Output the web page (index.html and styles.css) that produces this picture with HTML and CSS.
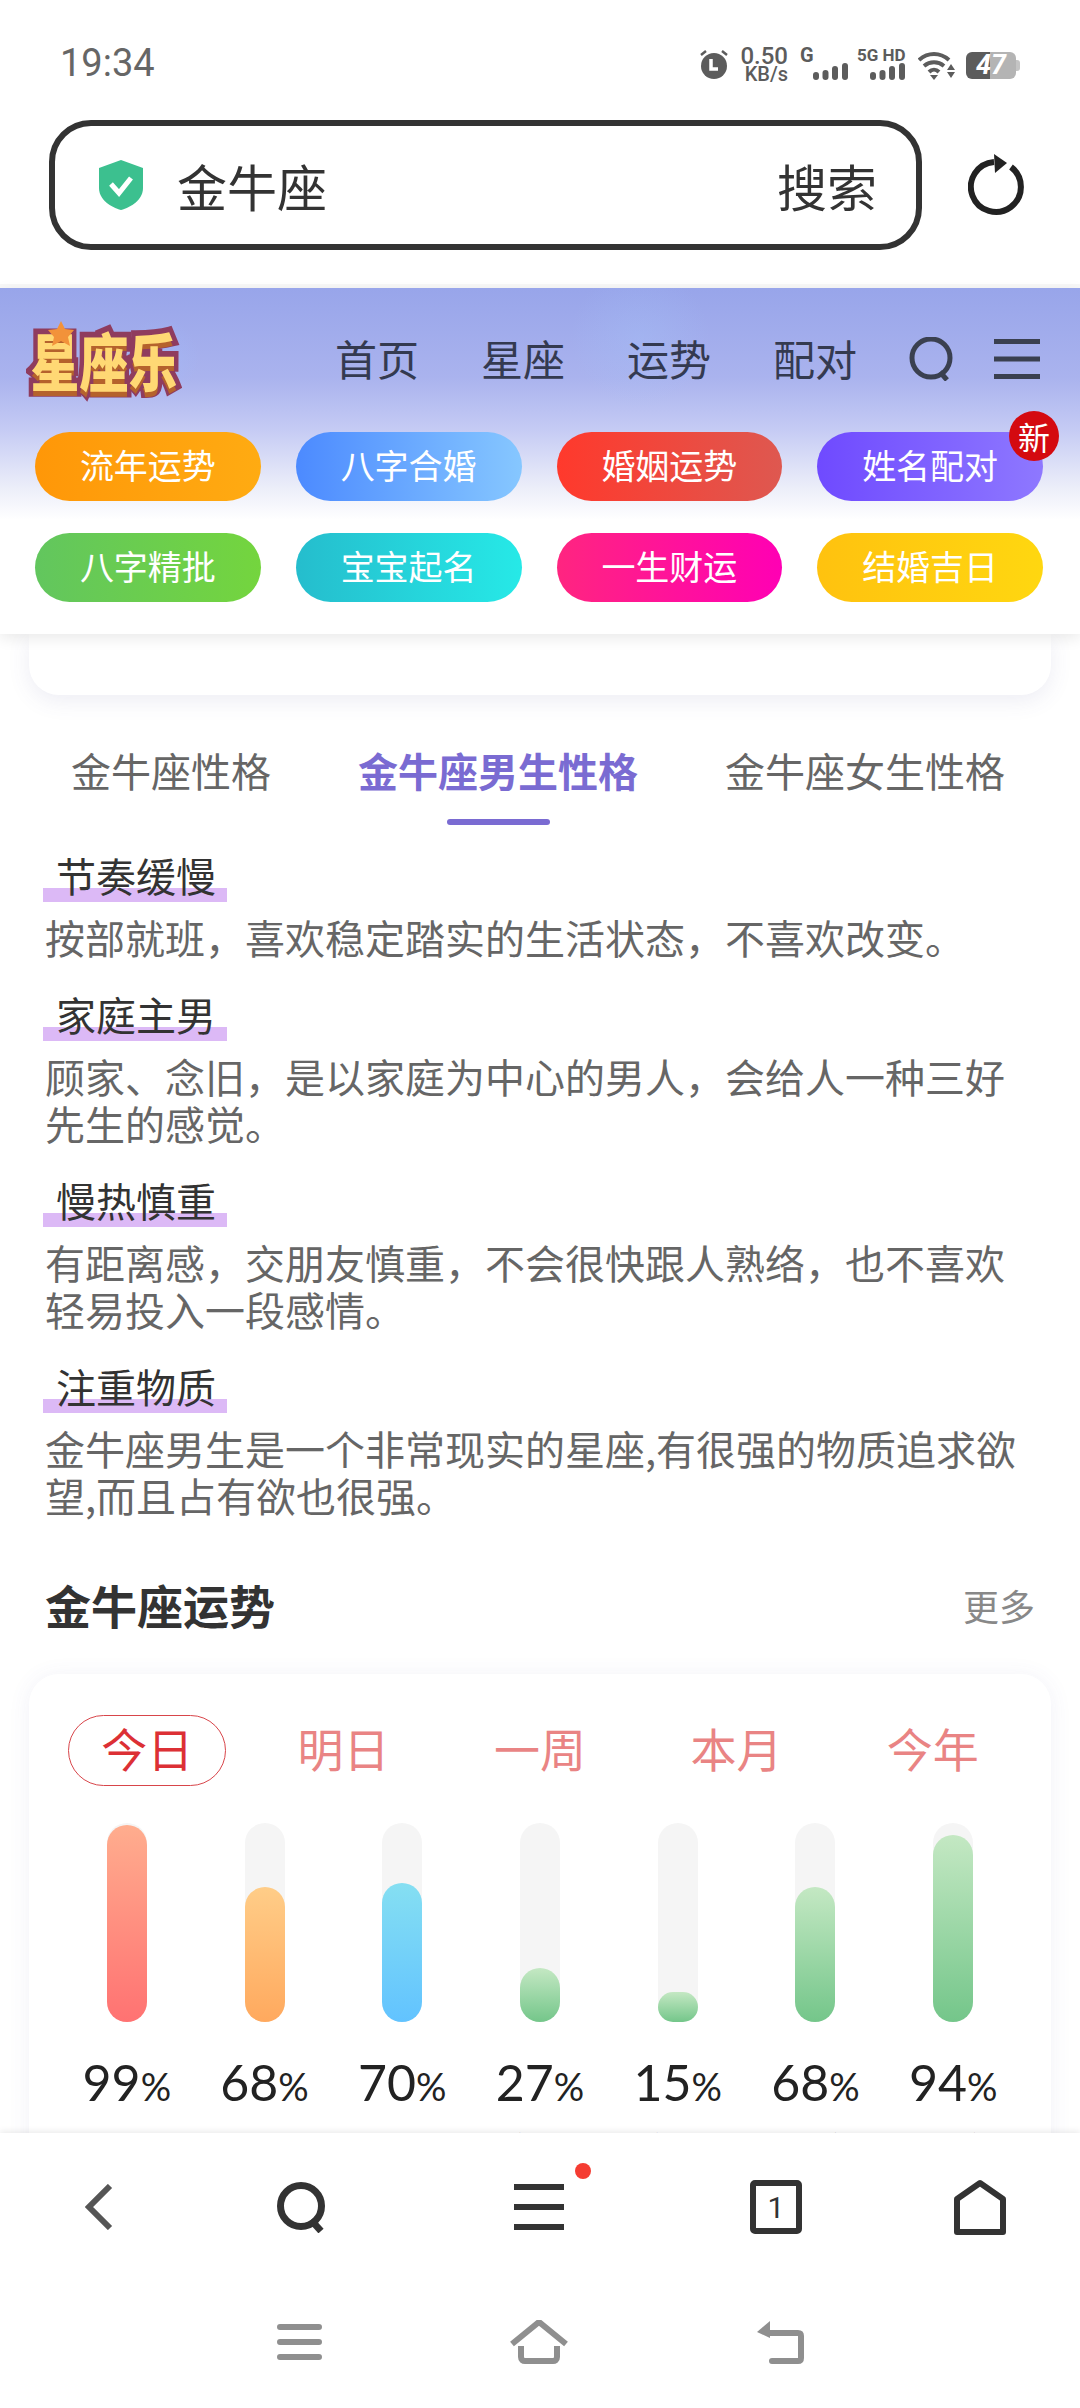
FILE: index.html
```html
<!DOCTYPE html>
<html lang="zh-CN">
<head>
    <meta charset="UTF-8">
    <meta name="viewport" content="width=device-width, initial-scale=1.0">
    <title>金牛座</title>
    <link rel="stylesheet" href="styles.css">
</head>
<body>

<!-- 浏览器顶部 -->
<div class="browser-top">
    <div class="status-bar">
        <span class="status-time">19:34</span>
        <div class="status-icons">
            <svg class="icon-alarm" width="28" height="29" viewBox="0 0 28 29">
                <circle cx="14" cy="16" r="13" fill="#5c5c5c"/>
                <path d="M11 9v10h7" fill="none" stroke="#fff" stroke-width="3.5"/>
                <path d="M1 5l5-4M27 5l-5-4" stroke="#5c5c5c" stroke-width="2.5"/>
            </svg>
            <div class="net-speed">
                <span class="net-num">0.50</span>
                <span class="net-unit">KB/s</span>
            </div>
            <div class="signal">
                <span class="signal-label signal-g">G</span>
                <svg class="signal-bars" width="35" height="17" viewBox="0 0 35 17">
                    <rect x="0" y="9" width="6" height="8" rx="3" fill="#5c5c5c"/>
                    <rect x="9.5" y="7" width="6" height="10" rx="3" fill="#5c5c5c"/>
                    <rect x="19" y="3" width="6" height="14" rx="3" fill="#5c5c5c"/>
                    <rect x="29" y="0" width="6" height="17" rx="3" fill="#5c5c5c"/>
                </svg>
            </div>
            <div class="signal">
                <span class="signal-label">5G HD</span>
                <svg class="signal-bars" width="35" height="17" viewBox="0 0 35 17">
                    <rect x="0" y="9" width="6" height="8" rx="3" fill="#5c5c5c"/>
                    <rect x="9.5" y="7" width="6" height="10" rx="3" fill="#5c5c5c"/>
                    <rect x="19" y="3" width="6" height="14" rx="3" fill="#5c5c5c"/>
                    <rect x="29" y="0" width="6" height="17" rx="3" fill="#5c5c5c"/>
                </svg>
            </div>
            <svg class="icon-wifi" width="37" height="29" viewBox="0 0 37 29">
                <path d="M1 9C10 1 22 1 31 9" fill="none" stroke="#5c5c5c" stroke-width="4"/>
                <path d="M6 15c6-5 14-5 20 0" fill="none" stroke="#5c5c5c" stroke-width="4"/>
                <path d="M11 21c3-3 7-3 10 0" fill="none" stroke="#5c5c5c" stroke-width="4"/>
                <path d="M12 24h8l-4 5z" fill="#5c5c5c"/>
                <path d="M33 13l4 6h-8zM29 21h8l-4 6z" fill="#5c5c5c"/>
            </svg>
            <div class="battery"><span>47</span></div>
        </div>
    </div>
    <div class="address-row">
        <div class="address-bar">
            <svg class="icon-shield" width="48" height="50" viewBox="0 0 48 50">
                <path d="M24 0L46 8V28C46 40 34 47 24 50C14 47 2 40 2 28V8Z" fill="#3cc08f"/>
                <path d="M14 24l8 9 12-15" fill="none" stroke="#fff" stroke-width="5"/>
            </svg>
            <span class="address-text">金牛座</span>
            <span class="address-action">搜索</span>
        </div>
        <svg class="icon-reload" width="56" height="62" viewBox="0 0 56 62">
            <path d="M43 13A25 25 0 1 1 26 8" fill="none" stroke="#222" stroke-width="6"/>
            <path d="M26 0l13 9-12 10z" fill="#222"/>
        </svg>
    </div>
</div>

<!-- 站点头部 -->
<header class="site-header">
    <div class="site-nav">
        <div class="logo">
            <span class="logo-text">星座乐</span>
            <svg class="logo-star" width="26" height="25" viewBox="0 0 26 25">
                <path d="M13 0l4 8 9 1-6 7 2 9-9-5-9 5 2-9-6-7 9-1z" fill="#f2923a"/>
            </svg>
        </div>
        <nav class="nav-links">
            <a>首页</a>
            <a>星座</a>
            <a>运势</a>
            <a>配对</a>
        </nav>
        <svg class="nav-search" width="45" height="44" viewBox="0 0 45 44">
            <circle cx="22" cy="21" r="19" fill="none" stroke="#3a4050" stroke-width="5"/>
            <path d="M31 35l7 8" stroke="#3a4050" stroke-width="5"/>
        </svg>
        <svg class="nav-menu" width="46" height="40" viewBox="0 0 46 40">
            <path d="M0 2.500h46M0 20h46M0 37.500h46" stroke="#3a4050" stroke-width="5"/>
        </svg>
    </div>
    <div class="pill-grid">
        <a class="pill pill-orange">流年运势</a>
        <a class="pill pill-blue">八字合婚</a>
        <a class="pill pill-red">婚姻运势</a>
        <a class="pill pill-purple">姓名配对<span class="pill-badge">新</span></a>
        <a class="pill pill-green">八字精批</a>
        <a class="pill pill-teal">宝宝起名</a>
        <a class="pill pill-pink">一生财运</a>
        <a class="pill pill-yellow">结婚吉日</a>
    </div>
</header>

<!-- 页面内容 -->
<main class="content">
    <div class="card-stub"></div>

    <div class="sub-tabs">
        <span class="sub-tab">金牛座性格</span>
        <span class="sub-tab active">金牛座男生性格</span>
        <span class="sub-tab">金牛座女生性格</span>
    </div>

    <div class="traits">
        <div class="trait-title">节奏缓慢</div>
        <p class="trait-text">按部就班，喜欢稳定踏实的生活状态，不喜欢改变。</p>
        <div class="trait-title">家庭主男</div>
        <p class="trait-text">顾家、念旧，是以家庭为中心的男人，会给人一种三好先生的感觉。</p>
        <div class="trait-title">慢热慎重</div>
        <p class="trait-text">有距离感，交朋友慎重，不会很快跟人熟络，也不喜欢轻易投入一段感情。</p>
        <div class="trait-title">注重物质</div>
        <p class="trait-text">金牛座男生是一个非常现实的星座,有很强的物质追求欲望,而且占有欲也很强。</p>
    </div>

    <div class="section-head">
        <h2>金牛座运势</h2>
        <a>更多</a>
    </div>

    <section class="fortune-card">
        <div class="fortune-tabs">
            <span class="fortune-tab active">今日</span>
            <span class="fortune-tab">明日</span>
            <span class="fortune-tab">一周</span>
            <span class="fortune-tab">本月</span>
            <span class="fortune-tab">今年</span>
        </div>
        <div class="fortune-bars">
            <div class="fortune-col">
                <div class="bar-track"><div class="bar-fill fill-red" style="height: 99%"></div></div>
                <div class="bar-value">99<small>%</small></div>
                <div class="bar-label">综合</div>
            </div>
            <div class="fortune-col">
                <div class="bar-track"><div class="bar-fill fill-orange" style="height: 68%"></div></div>
                <div class="bar-value">68<small>%</small></div>
                <div class="bar-label">工作</div>
            </div>
            <div class="fortune-col">
                <div class="bar-track"><div class="bar-fill fill-blue" style="height: 70%"></div></div>
                <div class="bar-value">70<small>%</small></div>
                <div class="bar-label">事业</div>
            </div>
            <div class="fortune-col">
                <div class="bar-track"><div class="bar-fill fill-green" style="height: 27%"></div></div>
                <div class="bar-value">27<small>%</small></div>
                <div class="bar-label">文化</div>
            </div>
            <div class="fortune-col">
                <div class="bar-track"><div class="bar-fill fill-green" style="height: 15%"></div></div>
                <div class="bar-value">15<small>%</small></div>
                <div class="bar-label">交际</div>
            </div>
            <div class="fortune-col">
                <div class="bar-track"><div class="bar-fill fill-green" style="height: 68%"></div></div>
                <div class="bar-value">68<small>%</small></div>
                <div class="bar-label">财富</div>
            </div>
            <div class="fortune-col">
                <div class="bar-track"><div class="bar-fill fill-green" style="height: 94%"></div></div>
                <div class="bar-value">94<small>%</small></div>
                <div class="bar-label">健康</div>
            </div>
        </div>
    </section>
</main>

<!-- 底部导航 -->
<footer class="bottom-bar">
    <div class="browser-nav">
        <svg width="28" height="46" viewBox="0 0 28 46">
            <path d="M25 2L4 23l21 21" fill="none" stroke="#555" stroke-width="6"/>
        </svg>
        <svg width="50" height="51" viewBox="0 0 50 51">
            <circle cx="24" cy="24" r="20.500" fill="none" stroke="#333" stroke-width="7"/>
            <path d="M34 38l10 11" stroke="#333" stroke-width="7"/>
        </svg>
        <div class="menu-wrap">
            <svg width="50" height="46" viewBox="0 0 50 46">
                <path d="M0 3h50M0 23h50M0 43h50" stroke="#333" stroke-width="6"/>
            </svg>
            <span class="menu-dot"></span>
        </div>
        <div class="tab-count">1</div>
        <svg width="52" height="56" viewBox="0 0 52 56">
            <path d="M3 20L26 4l23 16v33H3z" fill="none" stroke="#333" stroke-width="6" stroke-linejoin="round"/>
        </svg>
    </div>
    <div class="system-nav">
        <svg width="45" height="36" viewBox="0 0 45 36">
            <path d="M3 3h39M3 18h39M3 33h39" stroke="#8f8f8f" stroke-width="6" stroke-linecap="round"/>
        </svg>
        <svg width="58" height="44" viewBox="0 0 58 44">
            <path d="M2 24L29 2l27 22" fill="none" stroke="#8f8f8f" stroke-width="6" stroke-linejoin="round"/>
            <path d="M11 26v11c0 3 2 4 4 4h28c2 0 4-1 4-4V26" fill="none" stroke="#8f8f8f" stroke-width="6"/>
        </svg>
        <svg width="48" height="43" viewBox="0 0 48 43">
            <path d="M13 12h29c2 0 3 1 3 3v22c0 2-1 3-3 3H16" fill="none" stroke="#8f8f8f" stroke-width="6" stroke-linecap="round"/>
            <path d="M14 0v17L1 11z" fill="#8f8f8f"/>
        </svg>
    </div>
</footer>

</body>
</html>
```

FILE: styles.css
```css
* {
    box-sizing: border-box;
}

body {
    font-family: "Noto Sans CJK SC", Roboto, sans-serif;
    background-color: #fff;
    margin: 0;
    width: 1080px;
    height: 2408px;
    overflow: hidden;
    display: flex;
    flex-direction: column;
}

svg {
    display: block;
    flex-shrink: 0;
}

/* browser top */
.browser-top {
    height: 288px;
    border-bottom: 4px solid #f8f8f8;
    flex-shrink: 0;
}

.status-bar {
    height: 120px;
    padding: 47px 60px 0;
    display: flex;
    justify-content: space-between;
    align-items: flex-start;
    color: #5c5c5c;
    font-family: Roboto, sans-serif;
}

.status-time {
    font-size: 38px;
    line-height: 32px;
    font-weight: 400;
    color: #666;
}

.status-icons {
    display: flex;
    align-items: flex-start;
}

.icon-alarm {
    margin-top: 3px;
    margin-right: 12px;
}

.net-speed {
    width: 48px;
    margin-right: 12px;
    display: flex;
    flex-direction: column;
    align-items: flex-end;
    font-weight: 500;
}

.net-num {
    font-size: 24px;
    line-height: 18px;
    white-space: nowrap;
}

.net-unit {
    font-size: 20px;
    line-height: 19px;
    white-space: nowrap;
}

.signal {
    width: 48px;
    margin-right: 9px;
    display: flex;
    flex-direction: column;
    align-items: flex-start;
}

.signal-label {
    font-size: 17px;
    line-height: 16px;
    font-weight: 700;
    white-space: nowrap;
}

.signal-g {
    font-size: 20px;
}

.signal-bars {
    align-self: flex-end;
}

.icon-wifi {
    margin: 4px 11px 0 4px;
}

.battery {
    position: relative;
    width: 50px;
    height: 27px;
    margin-top: 5px;
    margin-right: 4px;
    border-radius: 6px;
    background: linear-gradient(90deg, #5c5c5c 48%, #b4b4b4 48%);
    color: #fff;
    font-size: 27px;
    line-height: 27px;
    font-weight: 700;
    font-style: italic;
    text-align: center;
}

.battery::after {
    content: "";
    position: absolute;
    right: -4px;
    top: 8px;
    width: 4px;
    height: 11px;
    border-radius: 0 3px 3px 0;
    background-color: #c4c4c4;
}

.address-row {
    height: 130px;
    padding-left: 49px;
    display: flex;
    align-items: center;
}

.address-bar {
    width: 873px;
    height: 130px;
    padding: 0 39px 0 42px;
    border: 6px solid #333;
    border-radius: 42px;
    display: flex;
    align-items: center;
    color: #333;
    font-size: 50px;
}

.address-text {
    margin-left: 32px;
}

.address-action {
    margin-left: auto;
}

.icon-reload {
    margin-left: 46px;
}

/* site header */
.site-header {
    position: relative;
    z-index: 2;
    flex-shrink: 0;
    height: 346px;
    background:
        radial-gradient(circle at 160px 70px, rgba(160, 190, 255, 0.35) 0, rgba(160, 190, 255, 0) 40px),
        radial-gradient(circle at 640px 50px, rgba(165, 195, 250, 0.3) 0, rgba(165, 195, 250, 0) 70px),
        linear-gradient(180deg, #98a5ea 0, #aab3ee 90px, #c4caf4 140px, #eceef9 200px, #fff 232px);
    box-shadow: 0 4px 14px rgba(0, 0, 0, 0.09);
}

.site-nav {
    height: 142px;
    padding-left: 28px;
    display: flex;
    align-items: center;
}

.logo {
    position: relative;
    width: 152px;
    height: 80px;
    display: flex;
    justify-content: center;
    align-items: center;
}

.logo-text {
    font-size: 49px;
    line-height: 60px;
    font-weight: 900;
    white-space: nowrap;
    color: #ffd874;
    -webkit-text-stroke: 9px #8f3c5e;
    paint-order: stroke fill;
    text-shadow: 0 4px 0 #b5622c;
    transform: scaleY(1.28);
}

.logo-star {
    position: absolute;
    left: 20px;
    top: 2px;
}

.nav-links {
    margin-left: 155px;
    display: flex;
    gap: 62px;
}

.nav-links a {
    font-size: 42px;
    line-height: 48px;
    padding-bottom: 2px;
    color: #343a50;
}

.nav-search {
    margin-left: 52px;
}

.nav-menu {
    margin-left: 40px;
}

.pill-grid {
    margin-top: 2px;
    padding: 0 37px 0 35px;
    display: grid;
    grid-template-columns: repeat(4, 1fr);
    column-gap: 35px;
    row-gap: 32px;
}

.pill {
    position: relative;
    height: 69px;
    padding-bottom: 4px;
    border-radius: 35px;
    display: flex;
    justify-content: center;
    align-items: center;
    color: #fff;
    font-size: 34px;
}

.pill-badge {
    position: absolute;
    right: -16px;
    top: -21px;
    width: 50px;
    height: 50px;
    border-radius: 50%;
    background-color: #d40a10;
    display: flex;
    justify-content: center;
    align-items: center;
    font-size: 32px;
}

.pill-orange { background: linear-gradient(90deg, #ff9708, #ffab12); }
.pill-blue { background: linear-gradient(90deg, #4c8aff, #86c7ff); }
.pill-red { background: linear-gradient(90deg, #ff392c, #de5850); }
.pill-purple { background: linear-gradient(90deg, #6f4aff, #8e78ff); }
.pill-green { background: linear-gradient(90deg, #62c65e, #74d53e); }
.pill-teal { background: linear-gradient(90deg, #25bdcd, #26e9e7); }
.pill-pink { background: linear-gradient(90deg, #ff2580, #ff00b4); }
.pill-yellow { background: linear-gradient(90deg, #ffc20f, #ffd710); }

/* page content */
.content {
    flex: 1;
    min-height: 0;
    overflow: hidden;
}

.card-stub {
    height: 61px;
    margin: 0 29px;
    border-radius: 0 0 30px 30px;
    background-color: #fff;
    box-shadow: 0 6px 22px rgba(80, 80, 150, 0.1);
}

.sub-tabs {
    height: 76px;
    margin-top: 54px;
    padding-left: 71px;
    display: flex;
    align-items: flex-start;
    gap: 87px;
}

.sub-tab {
    font-size: 40px;
    line-height: 42px;
    color: #666;
    white-space: nowrap;
}

.sub-tab.active {
    color: #7a6bd2;
    font-weight: 700;
}

.sub-tab.active::after {
    content: "";
    display: block;
    width: 103px;
    height: 6px;
    margin: 28px auto 0;
    border-radius: 3px;
    background-color: #7a6bd2;
}

.traits {
    margin-top: 28px;
}

.trait-title {
    width: 184px;
    height: 49px;
    margin-left: 43px;
    padding-left: 13px;
    font-size: 40px;
    line-height: 44px;
    color: #333;
    background: linear-gradient(#dcb9f6, #dcb9f6) no-repeat bottom / 100% 14px;
}

.trait-text {
    margin: 12px 0 31px;
    padding: 0 45px;
    font-size: 40px;
    line-height: 47px;
    color: #666;
}

.section-head {
    height: 46px;
    margin-top: 65px;
    padding: 0 45px 0 45px;
    display: flex;
    justify-content: space-between;
    align-items: center;
}

.section-head h2 {
    margin: 0;
    font-size: 46px;
    line-height: 40px;
    padding-bottom: 6px;
    font-weight: 700;
    color: #333;
}

.section-head a {
    font-size: 36px;
    line-height: 40px;
    padding-bottom: 4px;
    color: #888;
}

.fortune-card {
    margin: 44px 29px 0;
    padding: 41px 29px 40px;
    border-radius: 30px;
    background-color: #fff;
    box-shadow: 0 2px 22px rgba(80, 80, 150, 0.08);
}

.fortune-tabs {
    margin: 0 -9px;
    display: grid;
    grid-template-columns: repeat(5, 1fr);
}

.fortune-tab {
    width: 158px;
    height: 71px;
    padding-bottom: 8px;
    justify-self: center;
    border: 1px solid transparent;
    border-radius: 36px;
    display: flex;
    justify-content: center;
    align-items: center;
    font-size: 46px;
    color: #e98484;
}

.fortune-tab.active {
    border-color: #d8454a;
    color: #dc3035;
}

.fortune-bars {
    margin-top: 37px;
    display: grid;
    grid-template-columns: repeat(7, 1fr);
}

.fortune-col {
    display: flex;
    flex-direction: column;
    align-items: center;
}

.bar-track {
    width: 40px;
    height: 199px;
    border-radius: 20px;
    background-color: #f5f5f5;
    display: flex;
    align-items: flex-end;
}

.bar-fill {
    width: 100%;
    border-radius: 20px;
}

.fill-red { background: linear-gradient(180deg, #ffad8e, #ff7272); }
.fill-orange { background: linear-gradient(180deg, #ffcd88, #ffa95e); }
.fill-blue { background: linear-gradient(180deg, #85dff2, #62c3ff); }
.fill-green { background: linear-gradient(180deg, #c4e8c3, #74c68a); }

.bar-value {
    margin-top: 30px;
    font-family: Lato, sans-serif;
    font-size: 50px;
    line-height: 60px;
    font-weight: 400;
    color: #222;
    white-space: nowrap;
}

.bar-value small {
    font-size: 38px;
}

.bar-label {
    margin-top: 11px;
    font-size: 40px;
    line-height: 47px;
    color: #333;
}

/* bottom bars */
.bottom-bar {
    position: relative;
    z-index: 2;
    flex-shrink: 0;
    height: 275px;
    background-color: #fff;
    box-shadow: 0 -2px 6px rgba(0, 0, 0, 0.08);
}

.browser-nav {
    height: 148px;
    display: grid;
    grid-template-columns: 198px 208px 266px 208px 200px;
    justify-items: center;
    align-items: center;
}

.menu-wrap {
    position: relative;
}

.menu-dot {
    position: absolute;
    right: -27px;
    top: -21px;
    width: 16px;
    height: 16px;
    border-radius: 50%;
    background-color: #f53c32;
}

.tab-count {
    width: 52px;
    height: 54px;
    border: 6px solid #333;
    border-radius: 5px;
    display: flex;
    justify-content: center;
    align-items: center;
    font-family: Roboto, sans-serif;
    font-size: 30px;
    color: #333;
}

.system-nav {
    height: 122px;
    padding-left: 277px;
    display: flex;
    align-items: center;
    gap: 188px;
}
```
